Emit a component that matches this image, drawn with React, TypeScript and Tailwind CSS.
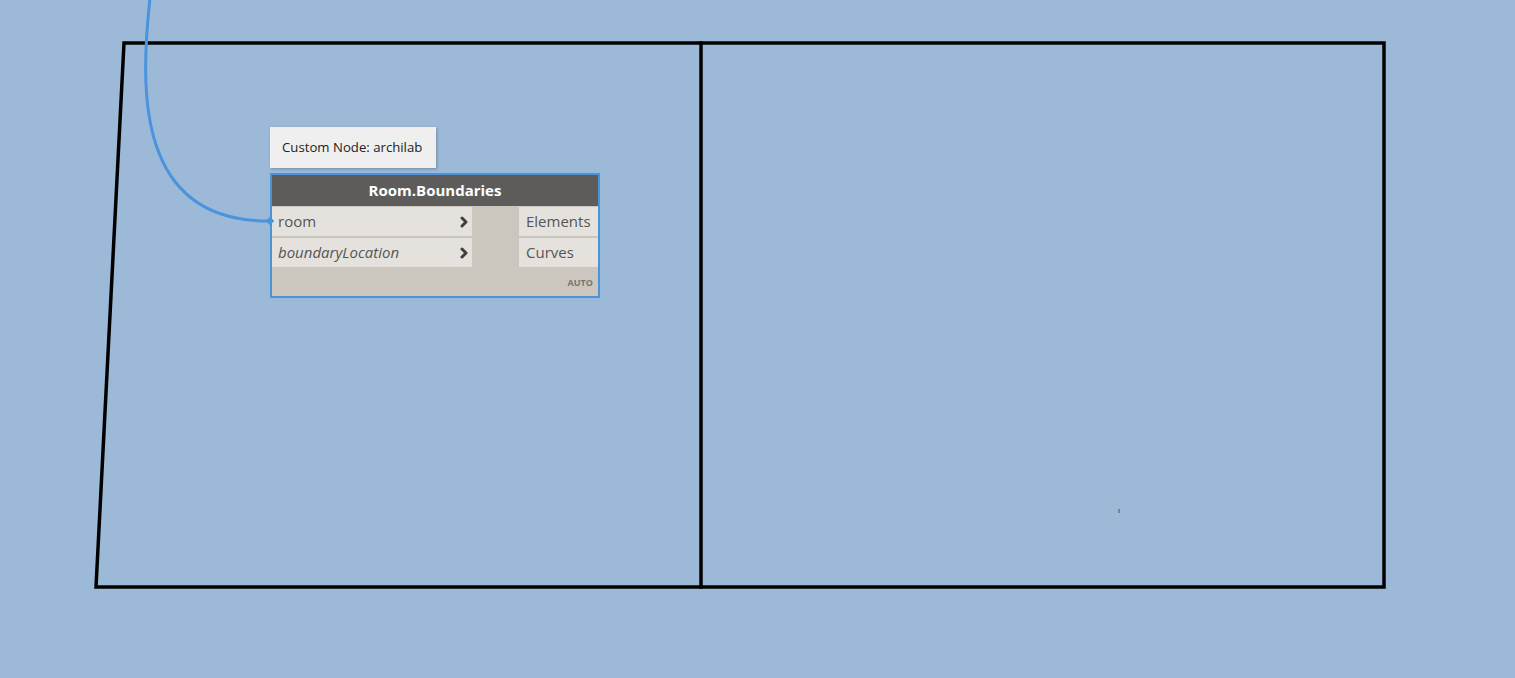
import { ChevronRight } from 'lucide-react'

const inputs = [
  { name: 'room', italic: false },
  { name: 'boundaryLocation', italic: true },
]
const outputs = ['Elements', 'Curves']

function RoomNode() {
  return (
    <div className="absolute left-[270px] top-[127px] w-[330px] font-['Open_Sans',sans-serif]">
      {/* Tooltip */}
      <div className="mb-[5px] inline-block h-[41px] w-[166px] bg-[#efefef] px-3 pt-[11px] text-[13.2px] leading-[18px] text-[#222] shadow-[1px_1px_3px_rgba(0,0,0,0.25)]">
        Custom Node: archilab
      </div>

      {/* Node body */}
      <div className="relative border-2 border-[#4a93dd] bg-[#cbc7bf]">
        <div className="flex h-[31px] items-center justify-center bg-[#5e5c5a] text-[15px] font-bold text-white">
          Room.Boundaries
        </div>
        <div className="flex justify-between">
          <div className="flex w-[200px] flex-col gap-[2px] pt-[1px]">
            {inputs.map((p) => (
              <div
                key={p.name}
                className="flex h-[29px] items-center justify-between bg-[#e5e2dd] pl-[6px] pr-[0px] text-[15px] text-[#555]"
              >
                <span className={p.italic ? 'italic' : ''}>{p.name}</span>
                <ChevronRight className="h-[16px] w-[16px] text-[#3f3f3f]" strokeWidth={4.5} />
              </div>
            ))}
          </div>
          <div className="flex w-[79px] flex-col gap-[2px] pt-[1px]">
            {outputs.map((o) => (
              <div
                key={o}
                className="flex h-[29px] items-center bg-[#e5e2dd] pl-[7px] text-[15px] text-[#555]"
              >
                {o}
              </div>
            ))}
          </div>
        </div>
        <div className="flex h-[29px] items-center justify-end pr-[5px] pt-[2px] text-[9px] font-bold text-[#7b756f]">
          AUTO
        </div>
        {/* input port marker */}
        <div className="absolute left-[-5px] top-[43px] h-[6px] w-[6px] rotate-45 bg-[#4a93dd]" />
      </div>
    </div>
  )
}

export default function App() {
  return (
    <div className="relative h-[678px] w-[1515px] overflow-hidden bg-[#9cbad8]">
      <svg className="absolute inset-0" width="1515" height="678" viewBox="0 0 1515 678">
        {/* room outline */}
        <g stroke="#000" strokeWidth="3.5" fill="none" strokeLinecap="square">
          <path d="M124 43 L1384 43 L1384 587 L96 587 Z" />
          <path d="M701 43 L701 587" />
        </g>
        {/* wire */}
        <path
          d="M150 -2 C 140 90, 136 221, 268 221"
          stroke="#4a93dd"
          strokeWidth="3"
          fill="none"
        />
        {/* stray mark */}
        <rect x="1118.5" y="509" width="1" height="4" fill="#1a6b2a" />
      </svg>
      <RoomNode />
    </div>
  )
}
